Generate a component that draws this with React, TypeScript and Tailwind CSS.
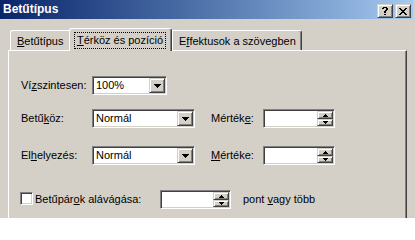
import React from 'react';

// Classic 3D edges: raised = buttons, sunken = edit/combo fields.
const RAISED =
  'border border-t-[#d4d0c8] border-l-[#d4d0c8] border-r-[#404040] border-b-[#404040] bg-[#d4d0c8] shadow-[inset_1px_1px_0_#ffffff,inset_-1px_-1px_0_#808080]';
const SUNKEN =
  'border border-t-[#808080] border-l-[#808080] border-r-white border-b-white bg-white shadow-[inset_1px_1px_0_#404040,inset_-1px_-1px_0_#d4d0c8]';

const Q = ['.####.', '##..##', '....##', '...##.', '..##..', '..##..', '......', '..##..'];
const X = ['##....##', '.##..##.', '..####..', '...##...', '..####..', '.##..##.', '##....##'];

function Pixels({ rows }: { rows: string[] }) {
  const w = rows[0].length;
  return (
    <svg width={w} height={rows.length} shapeRendering="crispEdges" className="block">
      {rows.flatMap((r, y) =>
        r.split('').map((c, x) => (c === '#' ? <rect key={`${x}-${y}`} x={x} y={y} width={1} height={1} fill="#000" /> : null)),
      )}
    </svg>
  );
}

function Tri({ w, up = false }: { w: number; up?: boolean }) {
  const rows = (w + 1) / 2;
  return (
    <svg width={w} height={rows} shapeRendering="crispEdges" className="block">
      {Array.from({ length: rows }, (_, i) => (
        <rect key={i} x={i} y={up ? rows - 1 - i : i} width={w - 2 * i} height={1} fill="#000" />
      ))}
    </svg>
  );
}

function Combo({ value, className }: { value: string; className: string }) {
  return (
    <div className={`${SUNKEN} flex h-[19px] p-px ${className}`}>
      <span className="flex-1 pl-[2px] leading-[15px]">{value}</span>
      <div className={`${RAISED} flex h-[15px] w-[16px] items-center justify-center`}>
        <Tri w={7} />
      </div>
    </div>
  );
}

function Spin({ className }: { className: string }) {
  return (
    <div className={`${SUNKEN} flex h-[19px] p-px ${className}`}>
      <span className="flex-1" />
      <div className="flex w-[16px] flex-col">
        <div className={`${RAISED} flex h-[8px] items-center justify-center`}>
          <Tri w={5} up />
        </div>
        <div className={`${RAISED} flex h-[7px] items-center justify-center`}>
          <Tri w={5} />
        </div>
      </div>
    </div>
  );
}

function Acc({ pre, key_, post }: { pre: string; key_: string; post: string }) {
  return (
    <>
      {pre}
      <span className="underline underline-offset-[1px]">{key_}</span>
      {post}
    </>
  );
}

export default function App() {
  return (
    <div className="flex h-[218px] w-[415px] flex-col overflow-hidden bg-[#d4d0c8] font-['Liberation_Sans',Arial,sans-serif] text-[11px] leading-[13px] text-black">
      {/* title bar */}
      <div className="flex h-[19px] w-[413px] shrink-0 items-center justify-between bg-gradient-to-r from-[#0a246a] to-[#a6caf0] pl-[3px] pr-[2px]">
        <span className="text-[12px] font-bold text-white">Betűtípus</span>
        <div className="flex gap-[2px] self-start pt-[4px]">
          <div className={`${RAISED} flex h-[14px] w-[16px] items-center justify-center`}>
            <Pixels rows={Q} />
          </div>
          <div className={`${RAISED} flex h-[14px] w-[16px] items-center justify-center`}>
            <Pixels rows={X} />
          </div>
        </div>
      </div>

      {/* tabs */}
      <div className="flex h-[31px] shrink-0 items-end pl-[10px]">
        <div className="flex h-[20px] w-[59px] items-center rounded-tl-[3px] border-l border-t border-white pl-[6px] pt-[2px]">
          <Acc pre="" key_="B" post="etűtípus" />
        </div>
        <div className="relative z-10 -mb-px flex h-[23px] w-[103px] items-start rounded-t-[3px] border-l border-r border-t border-white border-r-[#404040] bg-[#d4d0c8] pl-[4px] pt-[3px] shadow-[inset_-1px_0_0_#808080]">
          <div className="flex h-[17px] w-[92px] items-center justify-center border border-dotted border-black">
            <Acc pre="" key_="T" post="érköz és pozíció" />
          </div>
        </div>
        <div className="flex h-[20px] w-[130px] items-center rounded-tr-[3px] border-l border-r border-t border-white border-r-[#404040] pl-[6px] pt-[2px] shadow-[inset_-1px_0_0_#808080]">
          <Acc pre="E" key_="f" post="fektusok a szövegben" />
        </div>
      </div>

      {/* panel */}
      <div className="ml-[8px] w-[399px] flex-1 border-l border-r border-t border-white border-r-[#404040] pt-[25px] shadow-[inset_-1px_0_0_#808080]">
        <div className="flex h-[19px] items-center pl-[12px]">
          <span className="w-[71px]">
            <Acc pre="Ví" key_="z" post="szintesen:" />
          </span>
          <Combo value="100%" className="w-[75px]" />
        </div>

        <div className="mt-[14px] flex h-[19px] items-center pl-[12px]">
          <span className="w-[71px]">
            <Acc pre="Betű" key_="k" post="öz:" />
          </span>
          <Combo value="Normál" className="w-[103px]" />
          <span className="ml-[16px] w-[52px]">
            <Acc pre="Mérték" key_="e" post=":" />
          </span>
          <Spin className="w-[72px]" />
        </div>

        <div className="mt-[18px] flex h-[19px] items-center pl-[12px]">
          <span className="w-[71px]">
            <Acc pre="El" key_="h" post="elyezés:" />
          </span>
          <Combo value="Normál" className="w-[103px]" />
          <span className="ml-[16px] w-[52px]">
            <Acc pre="" key_="M" post="értéke:" />
          </span>
          <Spin className="w-[72px]" />
        </div>

        <div className="mt-[25px] flex h-[19px] items-center pl-[11px]">
          <div className={`${SUNKEN} mb-[3px] h-[13px] w-[13px]`} />
          <span className="ml-[2px] w-[125px]">
            <Acc pre="Betűpár" key_="o" post="k alávágása:" />
          </span>
          <Spin className="w-[71px]" />
          <span className="ml-[12px]">
            pont <Acc pre="" key_="v" post="agy több" />
          </span>
        </div>
      </div>
    </div>
  );
}
